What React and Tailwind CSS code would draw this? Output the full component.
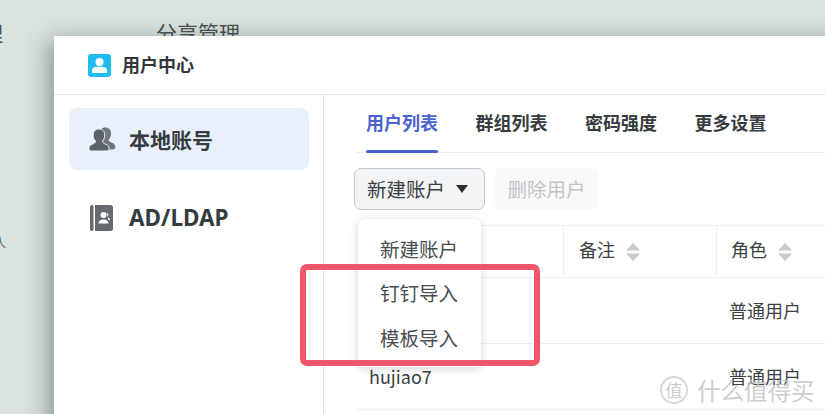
import React from 'react'

const cjk = { fontFamily: '"Noto Sans CJK SC", sans-serif' }

function SortIcon() {
  return (
    <svg viewBox="0 0 14 18" className="w-[14px] h-[18px] ml-[11px]">
      <path d="M7 0 L14 7.5 H0 Z" fill="#c8cbce" />
      <path d="M7 18 L14 10.5 H0 Z" fill="#c8cbce" />
    </svg>
  )
}

function UserBadge() {
  return (
    <svg viewBox="0 0 23 23" className="w-[23px] h-[23px]">
      <rect width="23" height="23" rx="3" fill="#1ebcf0" />
      <circle cx="11.5" cy="8" r="4" fill="#fff" />
      <path d="M4 19 v-2.5 c0-2.5 2-3.7 4-3.7 h7 c2 0 4 1.200 4 3.700 v2.500 Z" fill="#fff" />
    </svg>
  )
}

function UsersIcon() {
  const person = 'M10 2 c3.600 0 5.800 2.600 5.800 6 c0 2.600 -1 4.700 -2.300 6 c0 1.800 1.300 2.500 3.300 3.300 c2.200 .9 3.200 2.200 3.200 4.200 c0 1.500 -1 2.500 -2.500 2.500 H2.500 C1 24 0 23 0 21.500 c0 -2 1 -3.300 3.200 -4.200 c2 -.8 3.300 -1.500 3.300 -3.300 C5.200 12.700 4.200 10.600 4.200 8 C4.200 4.600 6.400 2 10 2 Z'
  return (
    <svg viewBox="0 0 27 25" className="w-[27px] h-[25px]">
      <path d={person} fill="#72777c" transform="translate(6.300 -1.500)" />
      <path d={person} fill="#5c6267" stroke="#e8f1fb" strokeWidth="1" />
    </svg>
  )
}

function BookIcon() {
  return (
    <svg viewBox="0 0 23 26" className="w-[23px] h-[26px]">
      <rect x="0" y="0" width="3.500" height="26" rx="1.700" fill="#666a6e" />
      <path d="M5 0 h15.500 a2.500 2.500 0 0 1 2.500 2.500 v21 a2.500 2.500 0 0 1 -2.500 2.500 H5 Z" fill="#666a6e" />
      <circle cx="13.500" cy="10" r="3" fill="#fff" />
      <path d="M8.500 18.500 c0 -3 2.500 -4 5 -4 s5 1 5 4 Z" fill="#fff" />
      <path d="M16.500 7.500 c2 .5 2.500 3 1 4.500 c1.500 .5 2.500 1.500 2.500 3 h-1.500 Z" fill="#fff" />
    </svg>
  )
}

function Row({ name, role }) {
  return (
    <div className="flex items-center h-[66px] border-b border-[#eceef0] text-[18px] text-[#3c4043] shrink-0">
      <div className="w-[207px] pl-[13px]">{name}</div>
      <div className="w-[153px]"></div>
      <div className="pl-[13px]">{role}</div>
    </div>
  )
}

export default function App() {
  return (
    <div className="relative w-[825px] h-[414px] overflow-hidden bg-[#d9e4e1]" style={cjk}>
      {/* desktop behind the window */}
      <span className="absolute left-[156px] top-[18px] text-[21px] leading-[28px] text-[#4a4f52]">分享管理</span>
      <span className="absolute left-[-18px] top-[18px] text-[21px] leading-[28px] text-[#4a4f52]">理</span>
      <span className="absolute left-[-6px] top-[236px] text-[12px] leading-[14px] text-[#4a4f52]">人</span>

      {/* user center window */}
      <div className="absolute left-[54px] top-[36px] w-[800px] h-[400px] bg-white flex flex-col shadow-[-6px_4px_22px_rgba(50,60,60,0.45)]">
        <div className="h-[59px] shrink-0 border-b border-[#e3e5e7] flex items-center pl-[34px] gap-[11px]">
          <UserBadge />
          <span className="text-[18px] font-bold text-[#33373a] leading-[24px] mb-[2px]">用户中心</span>
        </div>

        <div className="flex flex-1 min-h-0">
          <div className="w-[270px] shrink-0 border-r border-[#e3e5e7] pl-[15px] pt-[13px]">
            <div className="w-[240px] h-[62px] rounded-[8px] bg-[#e8f1fb] flex items-center pl-[20px] gap-[13px]">
              <UsersIcon />
              <span className="text-[21px] font-bold text-[#363b3f] mt-[2px]">本地账号</span>
            </div>
            <div className="h-[62px] mt-[17px] flex items-center pl-[21px] gap-[16px]">
              <BookIcon />
              <span className="text-[22.500px] font-bold text-[#363b3f]" style={{ fontFamily: '"Noto Sans", sans-serif' }}>AD/LDAP</span>
            </div>
          </div>

          <div className="flex-1 min-w-0 pl-[32px] flex flex-col">
            <div className="h-[58px] shrink-0 border-b border-[#eceef0] flex gap-[37.500px] pl-[10px] text-[18px] font-bold text-[#383c3f]">
              <div className="relative h-full flex items-center pb-[2px] text-[#4a63d0]">
                用户列表
                <div className="absolute left-0 right-0 bottom-[-1px] h-[3px] rounded-[2px] bg-[#4a63d0]"></div>
              </div>
              <div className="flex items-center pb-[2px]">群组列表</div>
              <div className="flex items-center pb-[2px]">密码强度</div>
              <div className="flex items-center pb-[2px]">更多设置</div>
            </div>

            <div className="flex gap-[10px] mt-[15px] ml-[-2px] shrink-0">
              <button className="w-[131px] h-[42px] rounded-[7px] border border-[#c4c8cc] bg-[#f2f4f6] flex items-center pl-[12px] text-[19.500px] text-[#3c4043]">
                新建账户
                <svg viewBox="0 0 12 8" className="w-[12px] h-[8px] ml-[11px]">
                  <path d="M0 0 H12 L6 8 Z" fill="#2e3134" />
                </svg>
              </button>
              <button className="w-[103px] h-[42px] rounded-[6px] bg-[#f8f9fa] text-[19.500px] text-[#c2c4c6]">删除用户</button>
            </div>

            <div className="flex items-center h-[53px] mt-[15px] border-t border-b border-[#eceef0] text-[18px] text-[#3c4043] shrink-0">
              <div className="w-[207px]"></div>
              <div className="w-[153px] h-full border-l border-[#eceef0] pl-[15px] flex items-center">
                <span className="mb-[4px]">备注</span><SortIcon />
              </div>
              <div className="flex-1 h-full border-l border-[#eceef0] pl-[14px] flex items-center">
                <span className="mb-[4px]">角色</span><SortIcon />
              </div>
            </div>
            <Row name="" role="普通用户" />
            <Row name="hujiao7" role="普通用户" />
          </div>
        </div>
      </div>

      {/* dropdown menu */}
      <div className="absolute left-[358px] top-[219px] w-[123px] h-[148px] rounded-[7px] bg-white shadow-[0_2px_10px_rgba(0,0,0,0.16)] flex flex-col pt-[7px] text-[19.500px] text-[#4a4e52]">
        <div className="h-[44.500px] flex items-center pl-[22px]">新建账户</div>
        <div className="h-[44.500px] flex items-center pl-[22px]">钉钉导入</div>
        <div className="h-[44.500px] flex items-center pl-[22px]">模板导入</div>
      </div>

      {/* red annotation box */}
      <div className="absolute left-[300px] top-[264px] w-[240px] h-[102px] rounded-[7px] border-[6px] border-[#f2566b]"></div>

      {/* watermark */}
      <div className="absolute left-[660px] top-[376px] flex items-center opacity-85">
        <div className="w-[28px] h-[28px] rounded-full border-2 border-[#d0d2d4] flex items-center justify-center text-[17px] text-[#c4c6c8]">值</div>
        <span className="ml-[9px] text-[23.500px] leading-[28px] text-[#c4c6c8]">什么值得买</span>
      </div>
    </div>
  )
}
